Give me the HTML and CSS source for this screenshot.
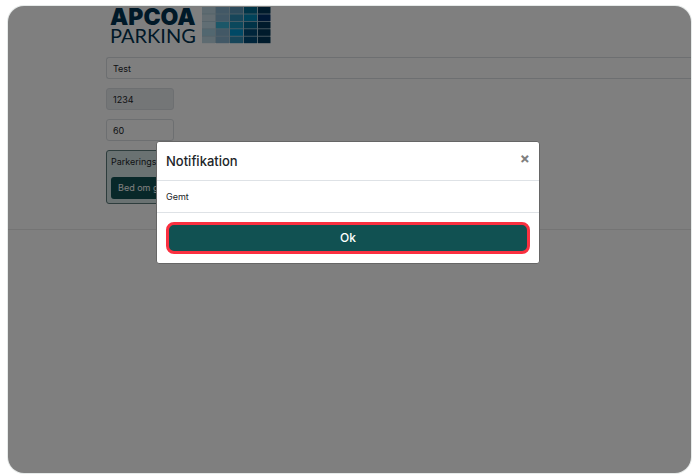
FILE: index.html
```
<!DOCTYPE html>
<html lang="da">
<head>
    <meta charset="UTF-8">
    <meta name="viewport" content="width=device-width, initial-scale=1.0">
    <title>APCOA Parking</title>

    <link rel="stylesheet" href="styles.css">
</head>
<body>

    <div class="screen">
        <main class="content">
            <!-- Logo -->
            <svg class="logo" width="162" height="40" viewBox="0 0 162 40" role="img" aria-label="APCOA Parking">
                <text class="logo-bold" x="0" y="19">APCOA</text>
                <text class="logo-light" x="0" y="37">PARKING</text>
                <rect x="92" y="1" width="68" height="36" fill="#a8c4d2" />
                <g fill="#bcd6e2">
                    <rect x="92" y="1" width="13" height="6.6" />
                    <rect x="92" y="8.4" width="13" height="6.6" fill="#c6dbe4" />
                    <rect x="92" y="15.8" width="13" height="6.6" fill="#c2dde8" />
                    <rect x="92" y="23.2" width="13" height="6.6" fill="#a4cfe0" />
                    <rect x="92" y="30.6" width="13" height="6.6" />
                </g>
                <g fill="#84b0cc">
                    <rect x="106" y="1" width="13" height="6.6" />
                    <rect x="106" y="8.4" width="13" height="6.6" />
                    <rect x="106" y="15.8" width="13" height="6.6" fill="#38aed0" />
                    <rect x="106" y="23.2" width="13" height="6.6" />
                    <rect x="106" y="30.6" width="13" height="6.6" />
                </g>
                <g fill="#2e8cb4">
                    <rect x="120" y="1" width="13" height="6.6" fill="#5a96b8" />
                    <rect x="120" y="8.4" width="13" height="6.6" />
                    <rect x="120" y="15.8" width="13" height="6.6" fill="#1690b8" />
                    <rect x="120" y="23.2" width="13" height="6.6" fill="#0092cc" />
                    <rect x="120" y="30.6" width="13" height="6.6" />
                </g>
                <g fill="#004a76">
                    <rect x="134" y="1" width="13" height="6.6" fill="#006a90" />
                    <rect x="134" y="8.4" width="13" height="6.6" fill="#0086b4" />
                    <rect x="134" y="15.8" width="13" height="6.6" fill="#00678e" />
                    <rect x="134" y="23.2" width="13" height="6.6" />
                    <rect x="134" y="30.6" width="13" height="6.6" />
                </g>
                <g fill="#003658">
                    <rect x="148" y="1" width="12.5" height="6.6" />
                    <rect x="148" y="8.4" width="12.5" height="6.6" fill="#00306a" />
                    <rect x="148" y="15.8" width="12.5" height="6.6" />
                    <rect x="148" y="23.2" width="12.5" height="6.6" />
                    <rect x="148" y="30.6" width="12.5" height="6.6" />
                </g>
            </svg>

            <form class="settings">
                <input type="text" class="field field-wide" value="Test" aria-label="Navn">
                <input type="text" class="field" value="1234" aria-label="Kode" readonly>
                <input type="text" class="field" value="60" aria-label="Minutter">

                <div class="card">
                    <div class="card-title">Parkeringsinfo</div>
                    <button type="button" class="btn">Bed om godkendelse</button>
                </div>
            </form>
        </main>

        <hr class="divider">

        <!-- Notification dialog on top of the page -->
        <div class="backdrop">
            <div class="modal" role="dialog" aria-modal="true" aria-labelledby="modalTitle">
                <div class="modal-header">
                    <h1 id="modalTitle">Notifikation</h1>
                    <button type="button" class="close" aria-label="Luk">&times;</button>
                </div>
                <div class="modal-body">Gemt</div>
                <div class="modal-footer">
                    <button type="button" class="btn-ok">Ok</button>
                </div>
            </div>
        </div>
    </div>

</body>
</html>
```
FILE: styles.css
```
* {
    box-sizing: border-box;
}

body {
    margin: 0;
    padding: 6px 9px 3px 8px;
    background: #fff;
    color: #212529;
    font-family: Inter, sans-serif;
    font-size: 9px;
    line-height: 14px;
}

button,
input {
    font: inherit;
}

.screen {
    position: relative;
    min-height: calc(100vh - 9px);
    border-radius: 16px;
    box-shadow: 0 0 0 1px #e6eae9;
    overflow: hidden;
}

.content {
    padding-left: 98px;
}

/* Logo */
.logo {
    display: block;
    margin-left: 4px;
}

.logo-bold,
.logo-light {
    fill: #003350;
}

.logo-bold {
    font-family: Inter, sans-serif;
    font-size: 23px;
    font-weight: 900;
}

.logo-light {
    font-family: Lato, sans-serif;
    font-size: 20px;
    font-weight: 400;
}

/* Form fields */
.settings {
    display: flex;
    flex-direction: column;
    align-items: flex-start;
    gap: 9px;
    padding-top: 11px;
}

.field {
    width: 68px;
    height: 22px;
    padding: 0 6px;
    border: 1px solid #dadfe3;
    border-radius: 3px;
    background: #fff;
    color: #212529;
}

.field-wide {
    width: 100%;
    border-right: 0;
    border-radius: 3px 0 0 3px;
}

.field[readonly] {
    background: #e9ecef;
}

.card {
    width: 220px;
    padding: 4px;
    border: 1px solid #5c7a7a;
    border-radius: 3px;
    background: #d5e5e5;
}

.card-title {
    margin-bottom: 8px;
}

.btn {
    height: 22px;
    padding: 0 7px;
    border: 0;
    border-radius: 3px;
    background: #115152;
    color: #fff;
}

.divider {
    margin: 25px 0 0;
    border: 0;
    border-top: 1px solid #e9e9e9;
}

/* Modal */
.backdrop {
    position: absolute;
    inset: 0;
    padding: 135px 3px 0 0;
    background: rgba(0, 0, 0, 0.5);
}

.modal {
    max-width: 384px;
    margin: 0 auto;
    border: 1px solid #666;
    border-radius: 3px;
    background: #fff;
}

.modal-header {
    display: flex;
    justify-content: space-between;
    align-items: flex-start;
    padding: 9px;
    border-bottom: 1px solid #dee2e6;
}

.modal-header h1 {
    margin: 0;
    font-size: 13px;
    font-weight: 500;
    line-height: 20px;
}

.close {
    padding: 0;
    border: 0;
    background: none;
    color: #7f7f7f;
    font-size: 15px;
    font-weight: 700;
    line-height: 16px;
}

.modal-body {
    padding: 9px 9px 8px;
    border-bottom: 1px solid #dee2e6;
}

.modal-footer {
    padding: 9px;
}

.btn-ok {
    display: block;
    width: 100%;
    height: 32px;
    border: 3px solid #fa3040;
    border-radius: 8px;
    background: #115152;
    color: #fff;
    font-size: 12px;
    font-weight: 500;
}
```
